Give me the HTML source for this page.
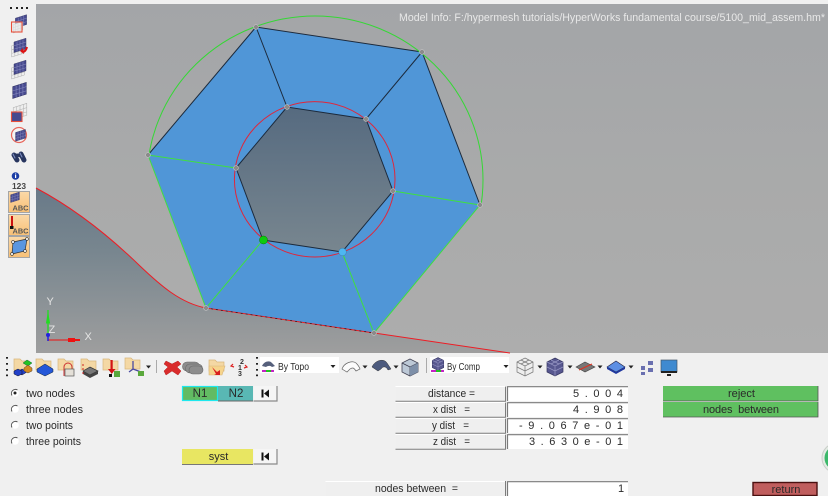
<!DOCTYPE html>
<html><head><meta charset="utf-8"><style>
html,body{margin:0;padding:0;width:828px;height:496px;overflow:hidden;background:#f0f0f0}
svg{display:block}
text{font-family:"Liberation Sans",sans-serif;font-size:11px;fill:#2a2a2a}
</style></head><body>
<svg width="828" height="496" viewBox="0 0 828 496" xmlns="http://www.w3.org/2000/svg">
<defs>
<linearGradient id="sl" gradientUnits="userSpaceOnUse" x1="0" y1="100" x2="0" y2="353"><stop offset="0" stop-color="#54697f"/><stop offset=".6" stop-color="#78868f"/><stop offset="1" stop-color="#9e9e9e"/></linearGradient>
<linearGradient id="bg" x1="0" y1="0" x2="0" y2="1"><stop offset="0" stop-color="#a3a5a8"/><stop offset=".5" stop-color="#a9aaaa"/><stop offset="1" stop-color="#adadad"/></linearGradient>
<linearGradient id="abc" x1="0" y1="0" x2="0" y2="1"><stop offset="0" stop-color="#fbd9a8"/><stop offset="1" stop-color="#f8c076"/></linearGradient>
<clipPath id="arcclip"><path d="M0 0H828V257L148 155L0 155Z"/></clipPath>
<g id="mesh"><path d="M-8 -4L8 -9V5L-8 10Z" fill="#474a8f" stroke="#2c2e5c" stroke-width=".6"/><path d="M-4 -5V9M0 -6.500V8M4 -7.700V6.500M-8 1L8 -4M-8 5.500L8 1" stroke="#8588bd" stroke-width=".7" fill="none"/></g>
<g id="meshl"><path d="M-8 -4L8 -9V5L-8 10Z" fill="#eee" stroke="#aaa" stroke-width=".6"/><path d="M-4 -5V9M0 -6.500V8M4 -7.700V6.500M-8 1L8 -4M-8 5.500L8 1" stroke="#b5b5b5" stroke-width=".7" fill="none"/></g>
<g id="fold"><path d="M-9 -8H-3L-1 -6H6V3H-9Z" fill="#f4d8a4" stroke="#d8b67c" stroke-width=".7"/></g>
<g id="arr"><path d="M-2.500 -1H2.500L0 2Z" fill="#222"/></g>
<g id="dots"><rect x="-1" y="0" width="2" height="1.700" fill="#222"/><rect x="-1" y="6" width="2" height="1.700" fill="#222"/><rect x="-1" y="12" width="2" height="1.700" fill="#222"/><rect x="-1" y="17.500" width="2" height="1.700" fill="#222"/></g>
<g id="cube"><path d="M0 -9L8 -5V5L0 9L-8 5V-5Z" fill="#57578f" stroke="#35355f" stroke-width=".7"/><path d="M-8 -5L0 -1L8 -5M0 -1V9M-8 0L0 4L8 0M-4 -7L4 -3M4 -7L-4 -3" fill="none" stroke="#9797c4" stroke-width=".7"/></g>
<g id="cubel"><path d="M0 -9L8 -5V5L0 9L-8 5V-5Z" fill="#eee" stroke="#777" stroke-width=".7"/><path d="M-8 -5L0 -1L8 -5M0 -1V9M-8 0L0 4L8 0M-4 -7L4 -3M4 -7L-4 -3" fill="none" stroke="#777" stroke-width=".7"/></g>
<g id="skip"><rect x="0" y="0" width="23.500" height="15" fill="#f5f5f5"/><path d="M0 15H23.500V0" fill="none" stroke="#8a8a8a" stroke-width="1.200"/><rect x="8" y="3.500" width="2" height="8" fill="#111"/><path d="M15.500 3.500V11.500L10.500 7.500Z" fill="#111"/></g>
<g id="lab"><rect x="0" y="0" width="110" height="15" fill="#efefef"/><path d="M0 15.200H110V.3" fill="none" stroke="#7d7d7d" stroke-width="1"/><path d="M0 .5H110" stroke="#fff"/></g>
<g id="fld"><rect x="0" y="0" width="121" height="15" fill="#fff"/><path d="M.5 15V.7H121" fill="none" stroke="#7a7a7a" stroke-width="1.200"/></g>
<g id="rad"><circle r="3.800" fill="#fff"/><path d="M-3 2.500A4 4 0 0 1 2.500 -3" fill="none" stroke="#555" stroke-width="1"/></g>
</defs>

<rect width="828" height="496" fill="#f0f0f0"/>
<rect x="36" y="4" width="792" height="349" fill="url(#bg)"/>

<!-- lower surface -->
<path d="M36 188C70 206 105 232 140 266C160 285 180 303 206 308L374 333L510 353H36Z" fill="url(#sl)"/>
<!-- nut face -->
<path d="M256 27L422 52L480 205L374 333L206 308L148 155Z" fill="#5096d7"/>
<path d="M287 107L366 119L393 191L342 252L263 240L236 168Z" fill="url(#sl)"/>
<!-- black edges -->
<g fill="none" stroke="#1c2a3c" stroke-width="1">
<path d="M148 155L256 27L422 52L480 205"/>
<path d="M256 27L287 107M422 52L366 119M236 168L287 107L366 119L393 191L342 252L263 240L236 168"/>
</g>
<!-- green edges -->
<g fill="none" stroke="#3fe03f" stroke-width="1">
<path d="M148 155L236 168M148 155L206 308L263 240M393 191L480 205L374 333L342 252"/>
<ellipse cx="315" cy="180" rx="168" ry="164" stroke="#35d835" clip-path="url(#arcclip)"/>
</g>
<!-- red -->
<g fill="none" stroke="#e0263a" stroke-width="1">
<ellipse cx="314.700" cy="179.300" rx="80.300" ry="77.700"/>
<path d="M36 188C70 206 105 232 140 266C160 285 180 303 206 308L374 333L510 353" stroke="#ee1c24"/>
</g>
<path d="M206 308L374 333" stroke="#111" stroke-width=".6" stroke-dasharray="2 3"/>
<!-- nodes -->
<g fill="#8a8a8a" stroke="#c4c4c4" stroke-width=".6">
<circle cx="256" cy="27" r="2.400"/><circle cx="422" cy="52" r="2.400"/><circle cx="480" cy="205" r="2.400"/><circle cx="374" cy="333" r="2.400"/><circle cx="206" cy="308" r="2.400"/><circle cx="148" cy="155" r="2.400"/>
<circle cx="287" cy="107" r="2.400"/><circle cx="366" cy="119" r="2.400"/><circle cx="393" cy="191" r="2.400"/><circle cx="236" cy="168" r="2.400"/>
</g>
<circle cx="263.500" cy="240" r="4" fill="#0ecb0e" stroke="#067a06" stroke-width=".5"/>
<circle cx="342.500" cy="252" r="3.800" fill="#4eb6f2" stroke="#3a7ca8" stroke-width=".5"/>

<text x="399" y="21" textLength="426" lengthAdjust="spacingAndGlyphs" style="fill:#e8e8e8">Model Info: F:/hypermesh tutorials/HyperWorks fundamental course/5100_mid_assem.hm*</text>

<!-- axis -->
<path d="M48 335V310" stroke="#22dd22" stroke-width="1.300"/><path d="M46.500 323L48 314L49.500 323Z" fill="#22dd22" stroke="#22dd22"/>
<path d="M48 340H80" stroke="#ee1111" stroke-width="1"/><rect x="68" y="339" width="12" height="2" fill="#ee1111"/><rect x="68" y="338" width="7" height="4" fill="#ee1111"/>
<circle cx="48" cy="335" r="2" fill="#2222dd"/><path d="M48 335V341" stroke="#2222dd" stroke-width="1.500"/>
<text x="46.500" y="305" style="font-size:11px;fill:#e4e4e4">Y</text>
<text x="48.500" y="333" style="font-size:11px;fill:#e4e4e4">Z</text>
<text x="84.500" y="340" style="font-size:11px;fill:#e4e4e4">X</text>

<!-- left toolbar -->
<g fill="#222"><rect x="10" y="7" width="2" height="2"/><rect x="16" y="7" width="2" height="2"/><rect x="21" y="7" width="2" height="2"/><rect x="26" y="7" width="2" height="2"/></g>
<use href="#mesh" transform="translate(21 21) scale(.7)"/><use href="#meshl" transform="translate(18 27) scale(.6)"/><rect x="11.500" y="22" width="10.500" height="10" fill="#e8e8e8" fill-opacity=".6" stroke="#e8503c" stroke-width="1.100"/>
<use href="#meshl" transform="translate(18 49) scale(.8)"/><use href="#mesh" transform="translate(20 45) scale(.75)"/><path d="M27 47C26 51 24 52 22 51.500" stroke="#dd1111" stroke-width="2" fill="none"/><path d="M23 48L20 51L24 54Z" fill="#dd1111"/>
<use href="#meshl" transform="translate(18 71) scale(.8)"/><use href="#mesh" transform="translate(20 67) scale(.75)"/>
<use href="#mesh" transform="translate(19.500 90) scale(.85)"/>
<use href="#meshl" transform="translate(20 111) scale(.85)"/><rect x="11.500" y="112" width="10.500" height="9.500" fill="#474a8f" stroke="#e8503c" stroke-width="1.100"/>
<circle cx="19" cy="135" r="7.500" fill="#f4f4f4" stroke="#e8675c" stroke-width="1.200"/><use href="#mesh" transform="translate(20.500 135) scale(.62)"/>
<g fill="none" stroke-linecap="round"><path d="M14 155L17 160" stroke="#28365f" stroke-width="5"/><path d="M21 154L24 160" stroke="#28365f" stroke-width="5"/><path d="M17 155L21 156" stroke="#28365f" stroke-width="3"/><path d="M13 154L15 158M20 153L22 157" stroke="#7f90c4" stroke-width="1"/></g>
<circle cx="15.500" cy="176" r="3.800" fill="#1c3ea6"/><rect x="15" y="175" width="1.200" height="3" fill="#fff"/><rect x="15" y="173.500" width="1.200" height="1" fill="#fff"/>
<text x="12" y="189" textLength="14" lengthAdjust="spacingAndGlyphs" style="font-size:8px;font-weight:bold;fill:#444">123</text>

<rect x="8.500" y="191.500" width="21" height="21" fill="url(#abc)" stroke="#a5a5a5"/>
<use href="#mesh" transform="translate(15 197) scale(.55)"/>
<text x="12.500" y="210.500" textLength="16" lengthAdjust="spacingAndGlyphs" style="font-size:7.500px;font-weight:bold;fill:#555">ABC</text>
<rect x="8.500" y="214.500" width="21" height="21" fill="url(#abc)" stroke="#a5a5a5"/>
<rect x="11" y="216" width="2" height="10" fill="#cc1111"/><rect x="10" y="226" width="3.500" height="3" fill="#111"/>
<text x="12.500" y="233.500" textLength="16" lengthAdjust="spacingAndGlyphs" style="font-size:7.500px;font-weight:bold;fill:#555">ABC</text>
<rect x="8.500" y="236.500" width="21" height="21" fill="url(#abc)" stroke="#a5a5a5"/>
<path d="M13 242L27 239L25 251L12 254Z" fill="#5a96e0" stroke="#333" stroke-width=".7"/>
<g fill="#f4f4f4" stroke="#333" stroke-width=".6"><circle cx="13" cy="242" r="1.400"/><circle cx="27" cy="239" r="1.400"/><circle cx="25" cy="251" r="1.400"/><circle cx="12" cy="254" r="1.400"/></g>

<!-- bottom toolbar -->
<use href="#dots" x="7" y="357"/>
<use href="#fold" x="23" y="367"/><path d="M17 372l5-3 5 3-5 3z" fill="#2240c8" stroke="#112" stroke-width=".5"/><path d="M23 363l4-3 5 3-4 3z" fill="#22c422" stroke="#163" stroke-width=".5"/><path d="M24 368l4-3 4 3v3l-4 2-4-2z" fill="#d38b22" stroke="#543" stroke-width=".5"/><path d="M14 371l4-2 4 2v3l-4 2-4-2z" fill="#2240c8" stroke="#112" stroke-width=".5"/>
<use href="#fold" x="45" y="367"/><path d="M37 369l8-5 8 5v3l-8 4-8-4z" fill="#2457d8" stroke="#123" stroke-width=".5"/>
<use href="#fold" x="67" y="367"/><path d="M64 376v-9a4 4 0 0 1 8 0v3" fill="none" stroke="#c33" stroke-width="1"/><rect x="65" y="369" width="9" height="7" fill="#e4e0d8" stroke="#555" stroke-width=".7"/>
<use href="#fold" x="90" y="367"/><path d="M83 371l7-4 8 4-8 4z" fill="#777" stroke="#333" stroke-width=".7"/><path d="M83 371v3l7 4 8-4v-3l-8 4z" fill="#444"/><path d="M83 364v12" stroke="#c22" stroke-width="1" stroke-dasharray="2 2"/>
<use href="#fold" x="112" y="367"/><rect x="110.500" y="360" width="2.200" height="11" fill="#d31414"/><path d="M108 369h7.500l-3.700 5z" fill="#d31414"/><rect x="109" y="374" width="3" height="3" fill="#111"/><rect x="114" y="371" width="6" height="6" fill="#5aa83c"/>
<use href="#fold" x="134" y="366"/><path d="M133 361v8l-4 3M133 369l8 3" fill="none" stroke="#4a4aa0" stroke-width="1.300"/><rect x="138" y="371" width="6" height="5" fill="#5aa83c"/>
<use href="#arr" x="148.500" y="366.500"/>
<rect x="156" y="360" width="1" height="13" fill="#aaa"/>
<path d="M166 361l6 3 6-3 3 3-4 3 4 4-3 4-6-4-6 4-2-4 4-4-4-3z" fill="#d92c2c" stroke="#b52222" stroke-width=".5"/>
<g fill="#8d8d8d" stroke="#666" stroke-width=".6"><path d="M187 362h8a3 3 0 0 1 0 9h-8a3 3 0 0 1 0-9z"/><path d="M190 364h8a3 3 0 0 1 0 9h-8a3 3 0 0 1 0-9z"/><path d="M193 366h6a3 3 0 0 1 0 8h-6a3 3 0 0 1 0-8z"/></g>
<use href="#fold" x="218" y="368"/><path d="M209 366h16l-3 9h-13z" fill="#f6d48c" stroke="#d8b67c" stroke-width=".6"/><path d="M212 367l5 5 3-2v5h-6l2-1z" fill="#d92020"/>
<text x="240" y="364" style="font-size:7px;font-weight:bold;fill:#333">2</text><text x="238" y="370" style="font-size:7px;font-weight:bold;fill:#333">1</text><text x="238" y="376" style="font-size:7px;font-weight:bold;fill:#333">3</text>
<path d="M233 364l-2 2 3 1M245 365l2 2-3 1" fill="none" stroke="#d22" stroke-width="1.200"/>
<use href="#dots" x="257" y="357"/>

<rect x="260" y="357" width="79" height="16" fill="#fff"/>
<path d="M262 366c2-5 8-6 10-3l3 3-3 1c-2-2-5-1-6 0z" fill="#56607c"/><rect x="262" y="370" width="12" height="2" fill="#c422c4"/><rect x="266" y="370" width="5" height="2" fill="#22c422"/>
<text x="278" y="370" textLength="31" lengthAdjust="spacingAndGlyphs" style="font-size:10px">By Topo</text>
<use href="#arr" x="333" y="366"/>
<path d="M342 369c2-6 10-9 14-6 2 2 3 3 4 6l-4 2c-2-3-3-4-6-2l-3 3z" fill="#fbfbfb" stroke="#666" stroke-width=".7"/>
<use href="#arr" x="365" y="366.500"/>
<path d="M372 367c3-7 12-9 15-4l4 6-3 1c-2-4-5-4-7-1l-3 2z" fill="#4d5b7e" stroke="#333" stroke-width=".5"/>
<use href="#arr" x="396" y="366.500"/>
<path d="M410 359l8 4v9l-8 4-8-4v-9z" fill="#bcc8d6" stroke="#445" stroke-width=".8"/><path d="M402 363l8 4 8-4M410 367v9" fill="none" stroke="#334" stroke-width=".7"/><path d="M410 367l8-4v9l-8 4z" fill="#7d8fa8"/>
<rect x="426" y="358" width="1" height="15" fill="#aaa"/>
<rect x="430" y="357" width="79" height="16" fill="#fff"/>
<use href="#cube" transform="translate(438 364) scale(.72)"/><rect x="431" y="370" width="13" height="2" fill="#c422c4"/><rect x="436" y="370" width="5" height="2" fill="#22c422"/>
<text x="447" y="370" textLength="33" lengthAdjust="spacingAndGlyphs" style="font-size:10px">By Comp</text>
<use href="#arr" x="506" y="366"/>
<use href="#cubel" x="525" y="367"/><use href="#arr" x="540" y="366.500"/>
<use href="#cube" x="555" y="367"/><use href="#arr" x="570" y="366.500"/>
<path d="M576 367l9-5 10 5-10 5z" fill="#777" stroke="#444" stroke-width=".6"/><path d="M579 370l13-6" stroke="#d32" stroke-width="1.200"/><use href="#arr" x="600" y="366.500"/>
<path d="M607 367l9-6 9 6-9 5z" fill="#5d8fe4" stroke="#224" stroke-width=".6"/><path d="M607 367v2l9 5 9-5v-2l-9 5z" fill="#2038a0"/><use href="#arr" x="631" y="366.500"/>
<g fill="#6a70b0"><rect x="641" y="366" width="4" height="4"/><rect x="648" y="361" width="5" height="4"/><rect x="641" y="372" width="4" height="3"/><rect x="648" y="368" width="5" height="4"/></g>
<rect x="661" y="360" width="16" height="12" fill="#3f8ad0" stroke="#456" stroke-width=".7"/><path d="M661 372h16M667 375h4" stroke="#222" stroke-width="2"/>

<!-- radios -->
<use href="#rad" x="15" y="393"/><circle cx="15" cy="393" r="1.500" fill="#222"/>
<use href="#rad" x="15" y="409"/><use href="#rad" x="15" y="425"/><use href="#rad" x="15" y="441"/>
<text x="26" y="397" textLength="49" lengthAdjust="spacingAndGlyphs">two nodes</text>
<text x="26" y="413" textLength="57" lengthAdjust="spacingAndGlyphs">three nodes</text>
<text x="26" y="429" textLength="47" lengthAdjust="spacingAndGlyphs">two points</text>
<text x="26" y="445" textLength="55" lengthAdjust="spacingAndGlyphs">three points</text>

<!-- N1/N2 -->
<rect x="182.500" y="386.500" width="35" height="14" fill="#62bb63" stroke="#1de8ee" stroke-width="1.200"/>
<rect x="218" y="386" width="35" height="15" fill="#59b8b4"/><path d="M218 401H253" stroke="#666"/>
<text x="200" y="397" text-anchor="middle" style="font-size:11.500px">N1</text>
<text x="236" y="397" text-anchor="middle" style="font-size:11.500px">N2</text>
<use href="#skip" x="253.500" y="386"/>
<rect x="182" y="449" width="71" height="15" fill="#e8e662"/><path d="M182 464.500H253" stroke="#777"/>
<text x="218.500" y="460" text-anchor="middle">syst</text>
<use href="#skip" x="253.500" y="449"/>

<!-- labels + fields -->
<use href="#lab" x="395.500" y="386"/><use href="#lab" x="395.500" y="402"/><use href="#lab" x="395.500" y="418"/><use href="#lab" x="395.500" y="434"/>
<text x="428" y="397" textLength="47" lengthAdjust="spacingAndGlyphs">distance =</text>
<text x="433" y="413" textLength="37" lengthAdjust="spacingAndGlyphs" xml:space="preserve">x dist   =</text>
<text x="432" y="429" textLength="37" lengthAdjust="spacingAndGlyphs" xml:space="preserve">y dist   =</text>
<text x="433" y="445" textLength="37" lengthAdjust="spacingAndGlyphs" xml:space="preserve">z dist   =</text>
<use href="#fld" x="507" y="386"/><use href="#fld" x="507" y="402"/><use href="#fld" x="507" y="418"/><use href="#fld" x="507" y="434"/>
<text x="573" y="397" textLength="50" xml:space="preserve">5 . 0 0 4</text>
<text x="573" y="413" textLength="50" xml:space="preserve">4 . 9 0 8</text>
<text x="519" y="429" textLength="104" xml:space="preserve">- 9 . 0 6 7 e - 0 1</text>
<text x="529" y="445" textLength="94" xml:space="preserve">3 . 6 3 0 e - 0 1</text>
<rect x="325.500" y="481" width="180" height="15" fill="#efefef"/><path d="M325.500 481.500H505" stroke="#fff"/><path d="M505.500 481V496" stroke="#7d7d7d"/>
<text x="375" y="492" textLength="83" lengthAdjust="spacingAndGlyphs" xml:space="preserve">nodes between  =</text>
<use href="#fld" x="507" y="481"/>
<text x="618" y="492">1</text>

<!-- right buttons -->
<rect x="663" y="386" width="155" height="15" fill="#5fc060"/><path d="M663 401H818V386" fill="none" stroke="#555" stroke-width=".8"/>
<text x="728" y="397" textLength="27" lengthAdjust="spacingAndGlyphs">reject</text>
<rect x="663" y="402" width="155" height="15" fill="#5fc060"/><path d="M663 417H818V402" fill="none" stroke="#555" stroke-width=".8"/>
<text x="703" y="413" textLength="76" xml:space="preserve">nodes  between</text>
<rect x="753" y="482.500" width="64" height="13" fill="#c05e5e" stroke="#4a1010" stroke-width="1.400"/>
<text x="786" y="493" text-anchor="middle">return</text>

<circle cx="837" cy="458" r="15" fill="#e4eae4" stroke="#c8cec8"/>
<circle cx="837" cy="458" r="12.500" fill="#3cb86a"/>
</svg>
</body></html>
